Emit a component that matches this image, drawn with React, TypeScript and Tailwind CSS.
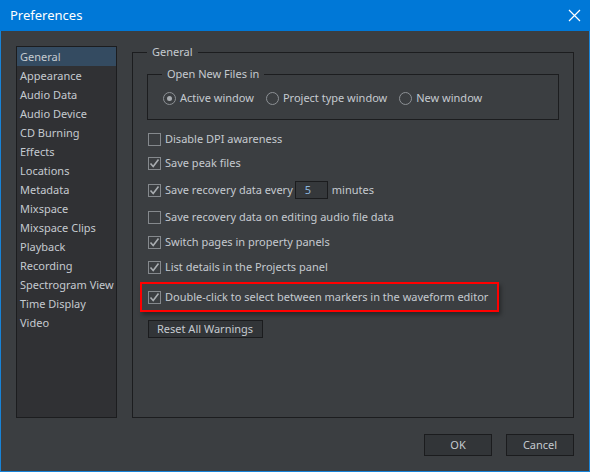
import React from 'react';

const font = { fontFamily: '"Noto Sans", "Liberation Sans", sans-serif' };

const pages = [
  'General',
  'Appearance',
  'Audio Data',
  'Audio Device',
  'CD Burning',
  'Effects',
  'Locations',
  'Metadata',
  'Mixspace',
  'Mixspace Clips',
  'Playback',
  'Recording',
  'Spectrogram View',
  'Time Display',
  'Video',
];

const CheckBox: React.FC<{ checked?: boolean }> = ({ checked }) => (
  <span className="flex h-[13px] w-[13px] shrink-0 items-center justify-center border border-[#85898d] bg-[#3b3e41]">
    {checked && (
      <svg width="11" height="11" viewBox="0 0 11 11">
        <path d="M1.5 5.5 L4.2 8.6 L9.5 1.6" fill="none" stroke="#a9adb1" strokeWidth="1.6" />
      </svg>
    )}
  </span>
);

const Radio: React.FC<{ checked?: boolean; label: string }> = ({ checked, label }) => (
  <div className="flex items-center gap-[4px]">
    <span className="flex h-[13px] w-[13px] items-center justify-center rounded-full border border-[#8d9195]">
      {checked && <span className="h-[5px] w-[5px] rounded-full bg-[#a9adb1]" />}
    </span>
    <span>{label}</span>
  </div>
);

const Row: React.FC<{ checked?: boolean; className?: string; children: React.ReactNode }> = ({
  checked,
  className = '',
  children,
}) => (
  <div className={`ml-[1px] flex h-[16px] items-center gap-[4px] ${className}`}>
    <CheckBox checked={checked} />
    {children}
  </div>
);

const App: React.FC = () => {
  return (
    <div
      className="flex h-[472px] w-[590px] flex-col border border-t-0 border-[#1883d7] bg-[#3b3e41] text-[11px] text-[#c5cad0]"
      style={font}
    >
      {/* Title bar */}
      <div className="-mx-[1px] flex h-[31px] shrink-0 items-center justify-between bg-[#0078d7] pl-[10px] pr-[9px]">
        <span className="text-[13px] text-white">Preferences</span>
        <svg width="13" height="13" viewBox="0 0 13 13">
          <path d="M1 1 L12 12 M12 1 L1 12" stroke="#ffffff" strokeWidth="1.2" />
        </svg>
      </div>

      <div className="flex flex-1 flex-col px-[15px] pt-[15px]">
        <div className="flex h-[372px] gap-[15px]">
          {/* Page list */}
          <div className="w-[101px] shrink-0 border border-[#1c1d1f] bg-[#303134]">
            {pages.map((p, i) => (
              <div
                key={p}
                className={`flex h-[19px] items-center pl-[3px] pt-[1px] whitespace-nowrap ${i === 0 ? 'bg-[#344b61]' : ''}`}
              >
                {p}
              </div>
            ))}
          </div>

          {/* General group */}
          <fieldset className="flex-1 border border-[#1c1d1f] pl-[14px] pr-[14px] pt-[10px]">
            <legend className="px-[5px] leading-[12px]">General</legend>

            <fieldset className="border border-[#1c1d1f] pl-[15px] pt-[10px] pb-[13px]">
              <legend className="-ml-[1px] px-[5px] leading-[12px]">Open New Files in</legend>
              <div className="flex h-[16px] items-center">
                <Radio checked label="Active window" />
                <div className="ml-[12px]">
                  <Radio label="Project type window" />
                </div>
                <div className="ml-[12px]">
                  <Radio label="New window" />
                </div>
              </div>
            </fieldset>

            <Row className="mt-[11px]">Disable DPI awareness</Row>
            <Row checked className="mt-[8px]">Save peak files</Row>
            <Row checked className="mt-[10px] h-[18px]">
              <span>Save recovery data every</span>
              <span className="-ml-[2px] flex h-[18px] w-[33px] items-center border border-[#1b1c1e] bg-[#35383b] pl-[9px] text-[#8db6de]">
                5
              </span>
              <span>minutes</span>
            </Row>
            <Row className="mt-[10px]">Save recovery data on editing audio file data</Row>
            <Row checked className="mt-[9px]">Switch pages in property panels</Row>
            <Row checked className="mt-[9px]">List details in the Projects panel</Row>

            <div className="mt-[7px] -ml-[7px] w-[359px] border-2 border-[#ff0000] px-[6px] py-[5px] shadow-[2px_3px_4px_rgba(0,0,0,0.35)]">
              <div className="flex h-[16px] items-center gap-[4px]">
                <CheckBox checked />
                <span className="whitespace-nowrap">Double-click to select between markers in the waveform editor</span>
              </div>
            </div>

            <button className="mt-[8px] ml-[1px] flex h-[18px] w-[115px] items-center border border-[#1b1c1e] bg-[#323538] pl-[8px]">
              Reset All Warnings
            </button>
          </fieldset>
        </div>

        {/* Footer buttons */}
        <div className="mt-[16px] flex justify-end gap-[14px]">
          <button className="h-[22px] w-[68px] border border-[#1b1c1e] bg-[#323538]">OK</button>
          <button className="h-[22px] w-[68px] border border-[#1b1c1e] bg-[#323538]">Cancel</button>
        </div>
      </div>
    </div>
  );
};

export default App;
